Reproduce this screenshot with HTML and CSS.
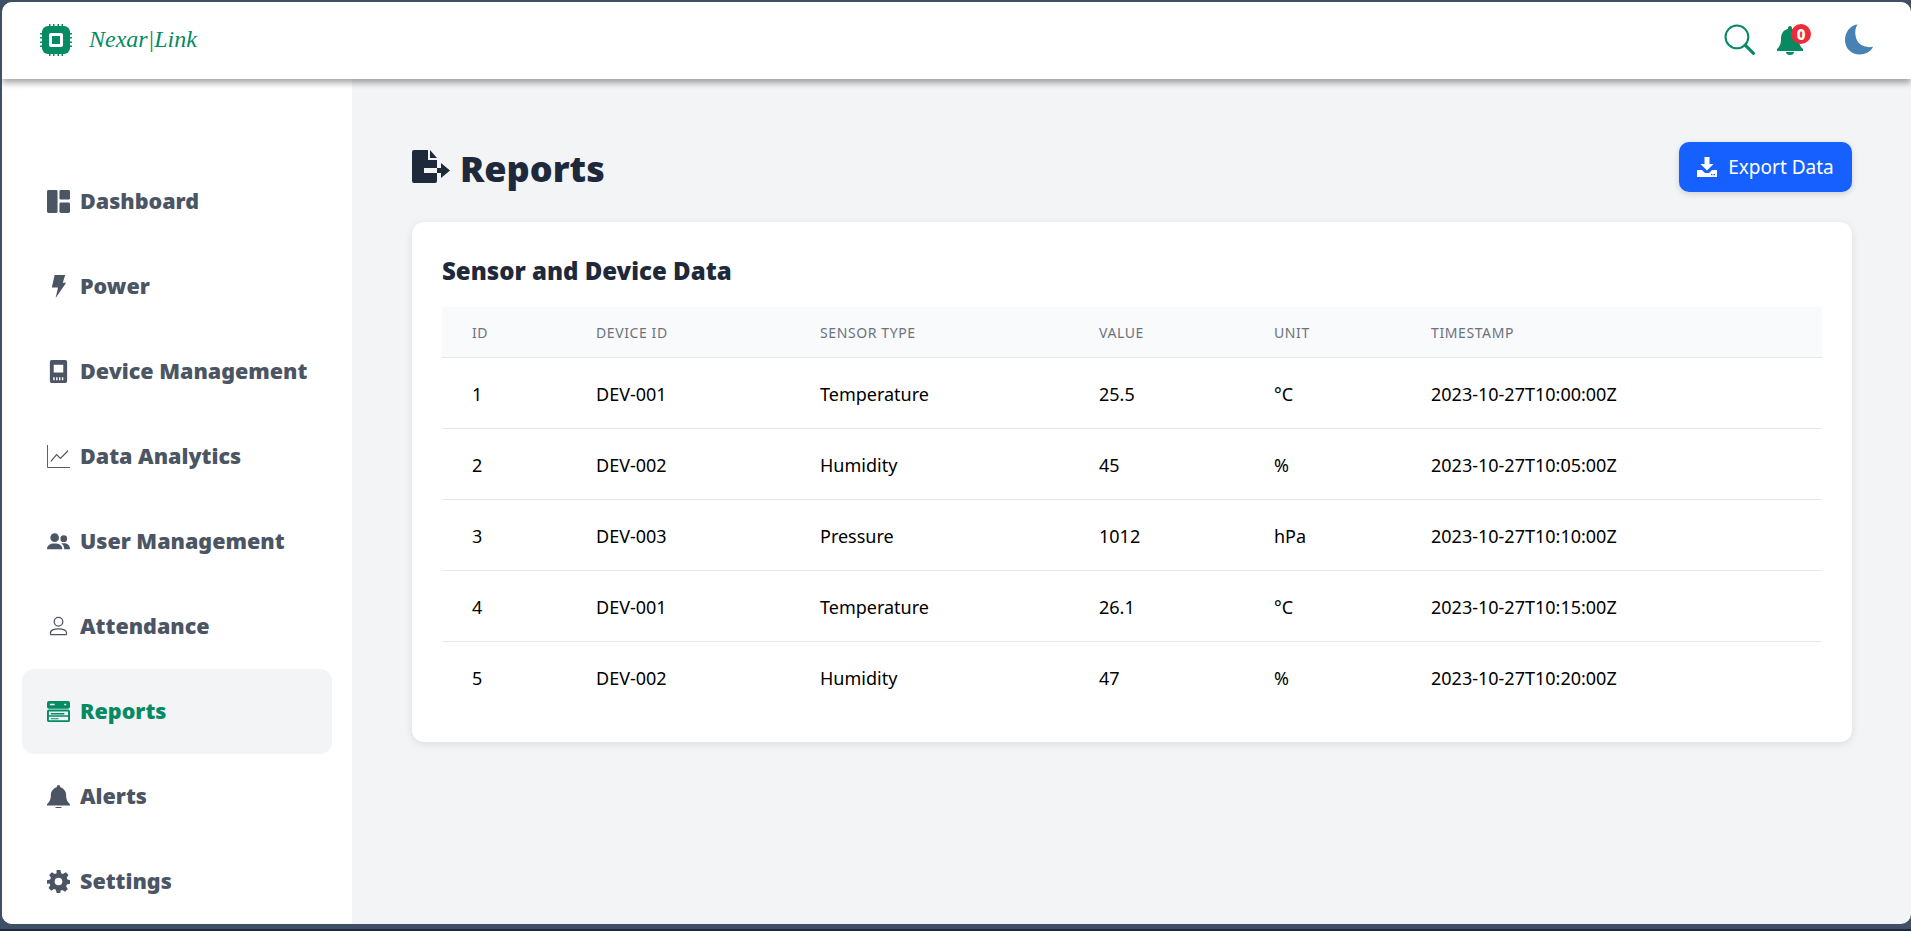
FILE: index.html
```html
<!DOCTYPE html>
<html lang="en">
<head>
    <meta charset="UTF-8">
    <meta name="viewport" content="width=device-width, initial-scale=1.0">
    <title>Reports</title>
    <link rel="stylesheet" href="styles.css">
</head>
<body>
    <div class="app">
        <header class="topbar">
            <div class="brand">
                <svg class="brand-icon" viewBox="0 0 32 32" fill="#058a63">
                    <path d="M8 2h16a6 6 0 0 1 6 6v16a6 6 0 0 1-6 6H8a6 6 0 0 1-6-6V8a6 6 0 0 1 6-6z"/>
                    <path d="M9 0h1.500v4H9zM13 0h1.500v4H13zM17.500 0H19v4h-1.500zM21.500 0H23v4h-1.500zM9 28h1.500v4H9zM13 28h1.500v4H13zM17.500 28H19v4h-1.500zM21.500 28H23v4h-1.500zM0 9h4v1.500H0zM0 13h4v1.500H0zM0 17.500h4V19H0zM0 21.500h4V23H0zM28 9h4v1.500h-4zM28 13h4v1.500h-4zM28 17.500h4V19h-4zM28 21.500h4V23h-4z"/>
                    <rect x="9" y="9" width="14" height="14" rx="2" fill="#fff"/>
                    <rect x="12" y="12" width="8" height="8" fill="#058a63"/>
                </svg>
                <span class="brand-name">Nexar|Link</span>
            </div>
            <div class="top-actions">
                <svg class="search-icon" viewBox="0 0 30 30" fill="none" stroke="#058a63">
                    <circle cx="12.500" cy="12.500" r="11" stroke-width="2"/>
                    <path d="M20.500 20.500L28.500 28.500" stroke-width="3" stroke-linecap="round"/>
                </svg>
                <div class="bell-wrap">
                    <svg class="bell-icon" viewBox="0 0 28 30" fill="#058a63">
                        <path d="M14 1a2 2 0 0 1 2 2v1c5 1 7 5 7 10 0 6 2 8 4 10v2H1v-2c2-2 4-4 4-10 0-5 2-9 7-10V3a2 2 0 0 1 2-2z"/>
                        <path d="M10 27h8a4 3 0 0 1-8 0z"/>
                    </svg>
                    <span class="badge">0</span>
                </div>
                <svg class="moon-icon" viewBox="0 0 30 31" fill="#4682b4">
                    <path d="M13 0C5 1 0 8 0 16c0 9 7 15 15 15 6 0 12-3 14-8-9 2-17-3-18-11-1-5 0-9 2-12z"/>
                </svg>
            </div>
        </header>
        <div class="body-row">
            <nav class="sidebar">
                <a class="nav-item">
                    <svg class="nav-icon" viewBox="0 0 24 24" fill="currentColor"><rect x="0" y="0" width="11" height="24" rx="1.500"/><rect x="13" y="0" width="11" height="10" rx="1.500"/><rect x="13" y="13" width="11" height="11" rx="1.500"/></svg>
                    <span>Dashboard</span>
                </a>
                <a class="nav-item">
                    <svg class="nav-icon" viewBox="0 0 24 24" fill="currentColor"><path d="M8 0h11l-2.500 8H20L9 24l2.500-11H5z"/></svg>
                    <span>Power</span>
                </a>
                <a class="nav-item">
                    <svg class="nav-icon" viewBox="0 0 24 24" fill="currentColor"><path fill-rule="evenodd" d="M5 0h14a2 2 0 0 1 2 2v20a2 2 0 0 1-2 2H5a2 2 0 0 1-2-2V2a2 2 0 0 1 2-2zM7 5v8h10V5zM6.500 18v3h1.500v-3zM9.500 18v3H11v-3zM12.500 18v3H14v-3zM15.500 18v3H17v-3z"/></svg>
                    <span>Device Management</span>
                </a>
                <a class="nav-item">
                    <svg class="nav-icon" viewBox="0 0 24 24" fill="none" stroke="currentColor"><path d="M.5 0v23.500H24" stroke-width="1"/><path d="M4 17l6-7 4 4 8-8" stroke-width="1.200"/></svg>
                    <span>Data Analytics</span>
                </a>
                <a class="nav-item">
                    <svg class="nav-icon" viewBox="0 0 24 24" fill="currentColor"><circle cx="8" cy="8" r="4.500"/><circle cx="17.500" cy="9" r="3.500"/><path d="M0 20c0-4 3-6 8-6s8 2 8 6zM18 20c0-3-1-5-3-6 5-1 9 1 9 6z"/></svg>
                    <span>User Management</span>
                </a>
                <a class="nav-item">
                    <svg class="nav-icon" viewBox="0 0 24 24" fill="none" stroke="currentColor" stroke-width="1.300"><circle cx="12" cy="7" r="4.500"/><path d="M4 20.500c-1-2 0-4 2-5 2-.800 4-1 6-1s4 .200 6 1c2 1 3 3 2 5z"/></svg>
                    <span>Attendance</span>
                </a>
                <a class="nav-item active">
                    <svg class="nav-icon" viewBox="0 0 24 24" fill="currentColor"><path fill-rule="evenodd" d="M2 1h20a2 2 0 0 1 2 2v4a2 2 0 0 1-2 2H2a2 2 0 0 1-2-2V3a2 2 0 0 1 2-2zM3 4v1.500h5V4zM18 4v1.500h2V4z"/><path fill-rule="evenodd" d="M2 10h20a2 2 0 0 1 2 2v9a2 2 0 0 1-2 2H2a2 2 0 0 1-2-2v-9a2 2 0 0 1 2-2zM2 12v4h20v-4zM2 17.500V21h20v-3.500zM4 13.500h14V15H4zM4 19h8v1H4z"/></svg>
                    <span>Reports</span>
                </a>
                <a class="nav-item">
                    <svg class="nav-icon" viewBox="0 0 24 24" fill="currentColor"><path d="M12 0a1.800 1.800 0 0 1 1.800 1.800v.500C18 3.500 20 7 20 11c0 5 2 7 4 9v1.500H0V20c2-2 4-4 4-9 0-4 2-7.500 6.200-8.700v-.500A1.800 1.800 0 0 1 12 0zM8.500 23h7c-.500 1-2 1.500-3.500 1.500s-3-.500-3.500-1.500z"/></svg>
                    <span>Alerts</span>
                </a>
                <a class="nav-item">
                    <svg class="nav-icon" viewBox="0 0 24 24" fill="currentColor"><path fill-rule="evenodd" d="M10 0h4l.700 3.300 2 .800L19.600 2.300l2.800 2.800-1.800 2.900.800 2L24 10.700v3.600l-3.300.700-.800 2 1.800 2.900-2.800 2.800-2.900-1.800-2 .800L14 24h-4l-.700-3.300-2-.800-2.900 1.800-2.800-2.800 1.800-2.900-.800-2L0 14.300v-3.600L3.300 10l.800-2-1.800-2.900 2.800-2.800 2.900 1.800 2-.800zM12 8a4 4 0 1 0 0 8 4 4 0 0 0 0-8z"/></svg>
                    <span>Settings</span>
                </a>
            </nav>
            <main class="content">
                <div class="page-head">
                    <h1 class="page-title">
                        <svg class="title-icon" viewBox="0 0 38 34" fill="#1e293b">
                            <path d="M2 0h14v10h9v8H12v5h13v8a2 2 0 0 1-2 2H2a2 2 0 0 1-2-2V2a2 2 0 0 1 2-2z"/>
                            <path d="M18 0l7 8h-7zM25 18h4v-5l9 7.500-9 7.500v-5h-4z"/>
                        </svg>
                        <span>Reports</span>
                    </h1>
                    <button class="export-btn">
                        <svg class="export-icon" viewBox="0 0 20 20" fill="#fff">
                            <path d="M7.500 0h5v7h4L10 13.500 3.500 7h4z"/>
                            <path d="M0 13h5l3 3h4l3-3h5v7H0zM14 17v1.200h1.500V17zM16.500 17v1.200H18V17z" fill-rule="evenodd"/>
                        </svg>
                        Export Data
                    </button>
                </div>
                <section class="card">
                    <h2 class="card-title">Sensor and Device Data</h2>
                    <table class="data-table">
                        <colgroup>
                            <col class="col-id"><col class="col-device"><col class="col-type"><col class="col-value"><col class="col-unit"><col>
                        </colgroup>
                        <thead>
                            <tr><th>ID</th><th>DEVICE ID</th><th>SENSOR TYPE</th><th>VALUE</th><th>UNIT</th><th>TIMESTAMP</th></tr>
                        </thead>
                        <tbody>
                            <tr><td>1</td><td>DEV-001</td><td>Temperature</td><td>25.5</td><td>°C</td><td>2023-10-27T10:00:00Z</td></tr>
                            <tr><td>2</td><td>DEV-002</td><td>Humidity</td><td>45</td><td>%</td><td>2023-10-27T10:05:00Z</td></tr>
                            <tr><td>3</td><td>DEV-003</td><td>Pressure</td><td>1012</td><td>hPa</td><td>2023-10-27T10:10:00Z</td></tr>
                            <tr><td>4</td><td>DEV-001</td><td>Temperature</td><td>26.1</td><td>°C</td><td>2023-10-27T10:15:00Z</td></tr>
                            <tr><td>5</td><td>DEV-002</td><td>Humidity</td><td>47</td><td>%</td><td>2023-10-27T10:20:00Z</td></tr>
                        </tbody>
                    </table>
                </section>
            </main>
        </div>
    </div>
</body>
</html>
```
FILE: styles.css
```css
html, body {
    height: 100%;
    margin: 0;
    padding: 0;
    overflow: hidden;
}
body {
    font-family: "Noto Sans", sans-serif;
    background-color: #3f4f66;
    box-sizing: border-box;
    padding: 2px 0 5px 2px;
    border-bottom: 2px solid #1e293b;
}
.app {
    height: 100%;
    display: flex;
    flex-direction: column;
    background-color: #f3f4f6;
    border-radius: 10px;
    overflow: hidden;
}
.topbar {
    position: relative;
    z-index: 2;
    height: 75px;
    flex: none;
    display: flex;
    align-items: center;
    justify-content: space-between;
    padding: 0 37px 2px 38px;
    background-color: #fff;
    border-radius: 10px 10px 0 0;
    box-shadow: 0 4px 6px rgba(0,0,0,0.35);
}
.brand {
    display: flex;
    align-items: center;
    gap: 17px;
}
.brand-icon {
    width: 32px;
    height: 32px;
}
.brand-name {
    font-family: "Liberation Serif", serif;
    font-style: italic;
    font-size: 24px;
    color: #058a63;
}
.top-actions {
    display: flex;
    align-items: center;
}
.search-icon {
    width: 31px;
    height: 31px;
    margin-right: 21px;
}
.bell-wrap {
    position: relative;
    width: 28px;
    height: 30px;
    margin-right: 41px;
}
.bell-icon {
    width: 28px;
    height: 30px;
}
.badge {
    position: absolute;
    top: -1px;
    left: 15px;
    width: 20px;
    height: 20px;
    border-radius: 50%;
    background-color: #ef2b3a;
    color: #fff;
    font-size: 15px;
    font-weight: 800;
    line-height: 20px;
    text-align: center;
}
.moon-icon {
    width: 29px;
    height: 31px;
}
.body-row {
    flex: 1;
    display: flex;
    min-height: 0;
}
.sidebar {
    width: 350px;
    flex: none;
    box-sizing: border-box;
    background-color: #fff;
    padding: 80px 20px 0 20px;
}
.nav-item {
    height: 85px;
    display: flex;
    align-items: center;
    gap: 10px;
    padding-left: 25px;
    border-radius: 12px;
    color: #4b5563;
    font-size: 21.5px;
    font-weight: 900;
}
.nav-item span {
    padding-bottom: 2px;
}
.nav-item.active {
    background-color: #f3f4f6;
    color: #058a63;
}
.nav-icon {
    width: 23px;
    height: 23px;
    flex: none;
}
.content {
    flex: 1;
    box-sizing: border-box;
    padding: 63px 59px 0 60px;
}
.page-head {
    display: flex;
    align-items: center;
    justify-content: space-between;
    height: 50px;
    margin-bottom: 30px;
}
.page-title {
    margin: 0;
    display: flex;
    align-items: center;
    gap: 10px;
    font-size: 36px;
    font-weight: 900;
    color: #1e293b;
}
.page-title span {
    padding-top: 2px;
}
.title-icon {
    width: 38px;
    height: 34px;
}
.export-btn {
    width: 173px;
    height: 50px;
    display: flex;
    align-items: center;
    justify-content: center;
    gap: 11px;
    border: none;
    border-radius: 10px;
    background-color: #1660ff;
    color: #fff;
    font-family: inherit;
    font-size: 19px;
    box-shadow: 0 2px 6px rgba(0,0,0,0.15);
}
.export-icon {
    width: 20px;
    height: 20px;
}
.card {
    height: 520px;
    box-sizing: border-box;
    padding: 30px;
    background-color: #fff;
    border-radius: 12px;
    box-shadow: 0 2px 8px rgba(0,0,0,0.1);
}
.card-title {
    margin: 0 0 19px 0;
    padding-top: 2px;
    height: 34px;
    line-height: 34px;
    font-size: 24px;
    font-weight: 900;
    color: #1e293b;
}
.data-table {
    width: 100%;
    border-collapse: collapse;
    table-layout: fixed;
}
.col-id { width: 124px; }
.col-device { width: 224px; }
.col-type { width: 279px; }
.col-value { width: 175px; }
.col-unit { width: 157px; }
.data-table th {
    height: 50px;
    padding: 0 0 0 30px;
    text-align: left;
    font-size: 14px;
    font-weight: 400;
    letter-spacing: 0.6px;
    color: #6b7280;
    background-color: #f9fafb;
    border-bottom: 1px solid #e5e7eb;
}
.data-table td {
    height: 69px;
    padding: 1px 0 0 30px;
    font-size: 18px;
    color: #000;
    border-bottom: 1px solid #e5e7eb;
}
.data-table tbody tr:last-child td {
    border-bottom: none;
}
```
